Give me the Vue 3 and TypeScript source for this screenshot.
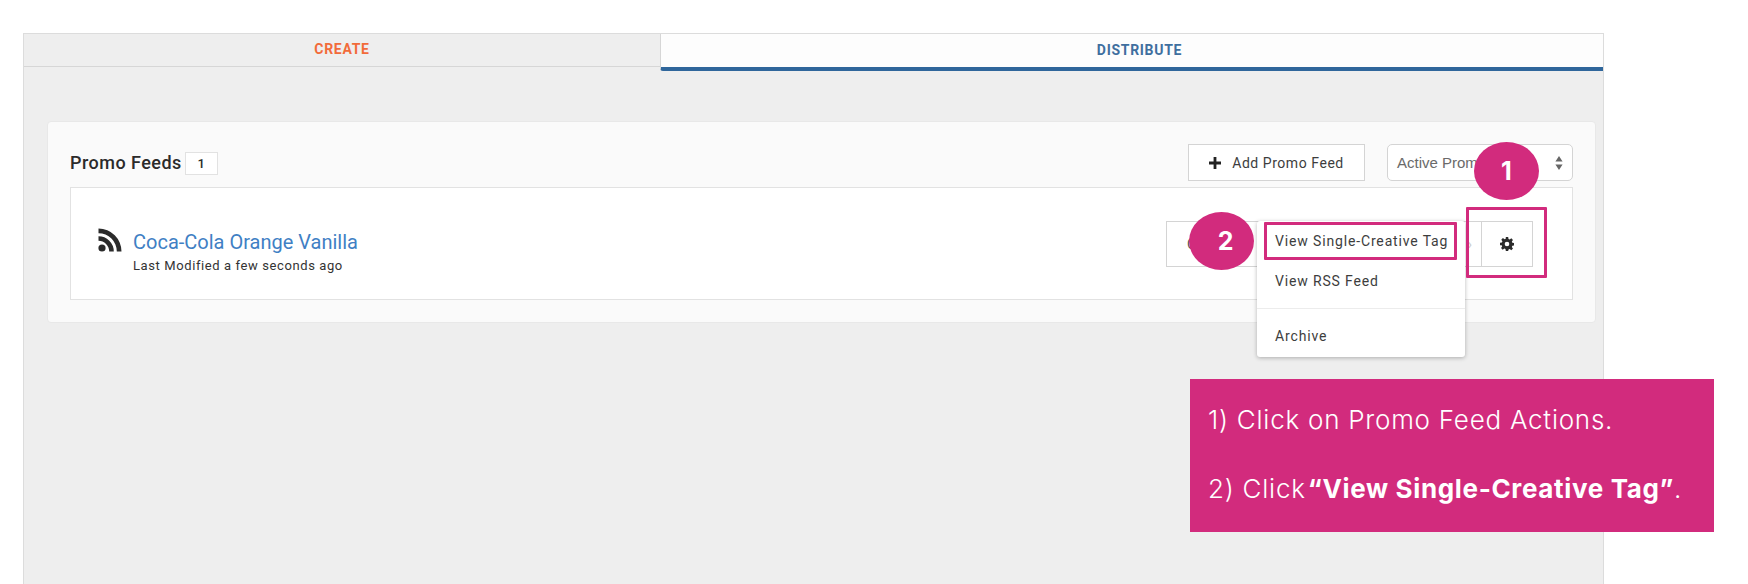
<script setup lang="ts">
// Promo feed list with the tutorial callouts laid on top
const menuItems = ['View Single-Creative Tag', 'View RSS Feed'];
</script>

<template>
  <div class="page">
    <div class="frame">
      <div class="tabs">
        <div class="tab create">CREATE</div>
        <div class="tab distribute">DISTRIBUTE</div>
      </div>

      <div class="panel">
        <div class="panel-head">
          <h2>Promo Feeds</h2>
          <span class="count">1</span>
          <button class="add">
            <svg class="plus" viewBox="0 0 12 12" width="12" height="12">
              <path d="M4.6 0h2.800v4.600H12v2.800H7.400V12H4.600V7.400H0V4.600h4.600z" fill="#222" />
            </svg>
            Add Promo Feed
          </button>
          <div class="select">
            <span>Active Promo Feeds</span>
            <svg viewBox="0 0 8 14" width="8" height="14">
              <path d="M4 0l3.600 5.400H.4zM4 14L.4 8.600h7.200z" fill="#666" />
            </svg>
          </div>
        </div>

        <div class="feed">
          <svg class="rss" viewBox="0 0 24 24" width="24" height="24">
            <circle cx="4" cy="20" r="3.600" fill="#2b2b2b" />
            <path d="M0.500 8.200v4.600a10.700 10.700 0 0 1 10.700 10.700h4.600A15.300 15.300 0 0 0 0.500 8.200z" fill="#2b2b2b" />
            <path d="M0.500 0.500v4.700a18.300 18.300 0 0 1 18.300 18.300h4.700A23 23 0 0 0 0.500 0.500z" fill="#2b2b2b" />
          </svg>
          <div class="feed-text">
            <a class="feed-name">Coca-Cola Orange Vanilla</a>
            <div class="feed-meta">Last Modified a few seconds ago</div>
          </div>
          <div class="actions">
            <button class="copy">
              <span>Copy</span>
              <span class="chevron">›</span>
            </button>
            <button class="gear">
              <svg viewBox="0 0 24 24" width="14" height="14">
                <path
                  fill-rule="evenodd"
                  fill="#2b2b2b"
                  d="M10 0h4l.6 3.300 2 .8L19.400 2.200l2.800 2.800-1.900 2.800.8 2 3.300.6v4l-3.300.6-.8 2 1.900 2.800-2.800 2.800-2.800-1.900-2 .8L14 24h-4l-.6-3.300-2-.8-2.800 1.900-2.800-2.800 1.900-2.800-.8-2L0 14v-4l3.300-.6.800-2-1.900-2.800 2.800-2.800 2.800 1.900 2-.8zM12 8a4 4 0 1 0 0 8 4 4 0 0 0 0-8z"
                />
              </svg>
            </button>
          </div>
        </div>
      </div>
    </div>

    <ul class="menu">
      <li v-for="item in menuItems" :key="item">{{ item }}</li>
      <li class="divider" />
      <li>Archive</li>
    </ul>

    <div class="mark mark-gear" />
    <div class="mark mark-item" />
    <div class="step step-1">1</div>
    <div class="step step-2">2</div>

    <div class="callout">
      <p>1) Click on Promo Feed Actions.</p>
      <p>2) Click <strong>“View Single-Creative Tag”</strong>.</p>
    </div>
  </div>
</template>

<style scoped>
.page {
  position: relative;
  height: 584px;
  overflow: hidden;
  background: #fff;
  padding: 33px 0 0 23px;
  box-sizing: border-box;
  font-family: Roboto, 'Liberation Sans', sans-serif;
  color: #2b2b2b;
}
.frame {
  width: 1581px;
  height: 560px;
  box-sizing: border-box;
  border: 1px solid #dcdcdc;
  border-bottom: 0;
  background: #eee;
}
.tabs {
  display: flex;
  height: 33px;
}
.tab {
  display: flex;
  align-items: center;
  justify-content: center;
  font-size: 14px;
  font-weight: 700;
  letter-spacing: 0.7px;
}
.create {
  width: 636px;
  color: #f26b3a;
  border-bottom: 1px solid #d6d6d6;
  padding-bottom: 3px;
}
.distribute {
  flex: 1;
  height: 37px;
  box-sizing: border-box;
  padding: 0 0 2px 15px;
  color: #3f6f9f;
  background: #fdfdfd;
  border-left: 1px solid #d6d6d6;
  border-bottom: 4px solid #2f669b;
  border-radius: 0 0 0 3px;
}
.panel {
  margin: 54px 7px 0 23px;
  height: 202px;
  box-sizing: border-box;
  padding: 22px 22px 0 22px;
  background: #fafafa;
  border: 1px solid #e8e8e8;
  border-radius: 4px;
}
.panel-head {
  display: flex;
  align-items: center;
  height: 37px;
}
h2 {
  margin: 0 3px 0 0;
  font-size: 18px;
  font-weight: 500;
  letter-spacing: 0.47px;
}
.count {
  width: 33px;
  height: 23px;
  box-sizing: border-box;
  margin-top: 2px;
  background: #fff;
  border: 1px solid #e2e2e2;
  display: flex;
  align-items: center;
  justify-content: center;
  font-size: 13px;
  font-weight: 500;
}
.add {
  margin-left: auto;
  width: 177px;
  height: 37px;
  display: flex;
  align-items: center;
  justify-content: center;
  gap: 11px;
  background: #fff;
  border: 1px solid #d4d4d4;
  font: inherit;
  font-size: 14px;
  letter-spacing: 0.55px;
  color: #3d3d3d;
}
.select {
  margin-left: 22px;
  width: 186px;
  height: 37px;
  box-sizing: border-box;
  display: flex;
  align-items: center;
  justify-content: space-between;
  padding: 0 9px 0 9px;
  background: #fff;
  border: 1px solid #d4d4d4;
  border-radius: 5px;
  font-family: 'Liberation Sans', sans-serif;
  font-size: 15px;
  color: #6a6a6a;
}
.feed {
  margin-top: 6px;
  height: 113px;
  box-sizing: border-box;
  display: flex;
  align-items: center;
  padding: 0 39px 0 27px;
  background: #fff;
  border: 1px solid #e2e2e2;
}
.rss {
  margin-top: -7px;
  flex: none;
}
.feed-text {
  margin-left: 11px;
  padding-top: 18px;
}
.feed-name {
  display: block;
  font-size: 20px;
  line-height: 24px;
  color: #3f80c4;
}
.feed-meta {
  margin-top: 3px;
  font-size: 13px;
  line-height: 18px;
  letter-spacing: 0.6px;
  color: #333;
}
.actions {
  margin-left: auto;
  display: flex;
  height: 46px;
}
.actions button {
  background: #fff;
  border: 1px solid #d4d4d4;
  padding: 0;
  font: inherit;
  font-size: 14px;
  color: #555;
  display: flex;
  align-items: center;
  justify-content: center;
}
.actions .copy {
  width: 316px;
  justify-content: space-between;
  padding: 0 9px 0 20px;
}
.chevron {
  color: #ccc;
}
.gear {
  width: 52px;
  margin-left: -1px;
}
.menu {
  position: absolute;
  left: 1257px;
  top: 221px;
  width: 208px;
  height: 136px;
  box-sizing: border-box;
  margin: 0;
  padding: 0;
  list-style: none;
  background: #fff;
  border-radius: 3px;
  box-shadow: 0 1px 4px rgba(0, 0, 0, 0.28);
  font-size: 14px;
  letter-spacing: 0.85px;
  color: #3d3d3d;
}
.menu li {
  height: 40px;
  line-height: 40px;
  padding-left: 18px;
}
.menu .divider {
  height: 1px;
  margin: 7px 0 7px;
  padding: 0;
  background: #ececec;
}
.mark {
  position: absolute;
  box-sizing: border-box;
  border: 3px solid #d22b7d;
  border-radius: 1px;
}
.mark-gear {
  left: 1466px;
  top: 207px;
  width: 81px;
  height: 71px;
}
.mark-item {
  left: 1264px;
  top: 222px;
  width: 193px;
  height: 38px;
}
.step {
  position: absolute;
  width: 65px;
  height: 58px;
  box-sizing: border-box;
  border-radius: 50%;
  background: #d22b7d;
  color: #fff;
  display: flex;
  align-items: center;
  justify-content: center;
  font-family: Inter, sans-serif;
  font-size: 25px;
  font-weight: 700;
}
.step-1 {
  left: 1474px;
  top: 142px;
}
.step-2 {
  left: 1189px;
  top: 212px;
  padding-left: 8px;
}
.callout {
  position: absolute;
  left: 1190px;
  top: 379px;
  width: 524px;
  height: 153px;
  box-sizing: border-box;
  padding: 26px 0 0 18px;
  background: #d22b7d;
  color: #fff;
  font-family: Inter, sans-serif;
  font-size: 26px;
  font-weight: 300;
  letter-spacing: 0.75px;
}
.callout p {
  margin: 0 0 39px;
  line-height: 30px;
}
.callout strong {
  margin-left: -6px;
  font-weight: 700;
  letter-spacing: 0.65px;
}
</style>
